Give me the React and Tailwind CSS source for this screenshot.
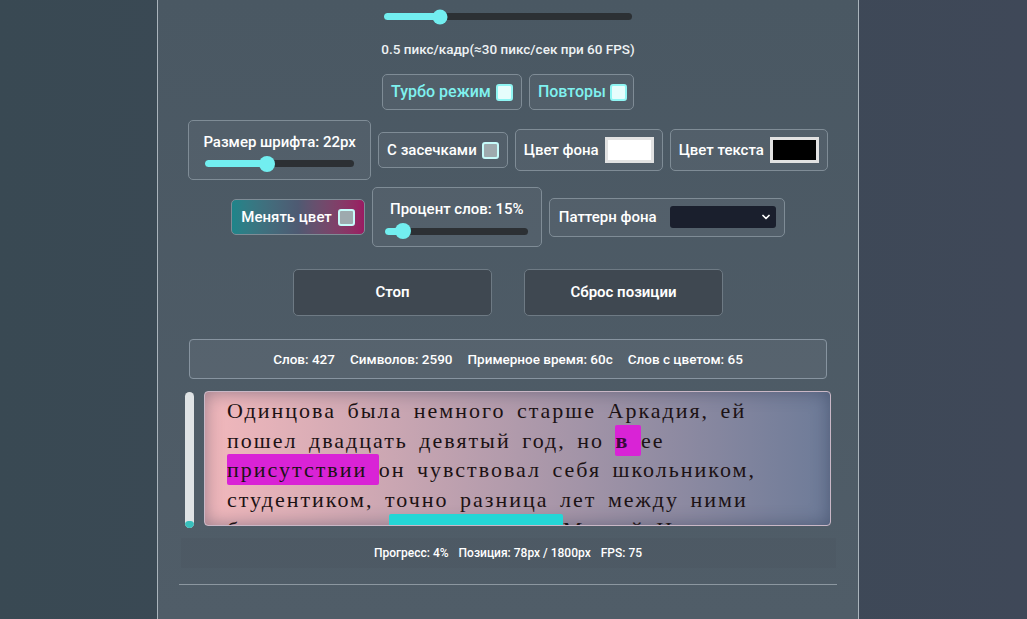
import React from 'react';
import { ChevronDown } from 'lucide-react';

function Slider({ width, fill, thumb = 15 }) {
  return (
    <div className="relative h-[7px] rounded-full bg-[#2c3034]" style={{ width }}>
      <div className="h-full rounded-full bg-[#72eef0]" style={{ width: fill }} />
      <div
        className="absolute top-1/2 -translate-y-1/2 -translate-x-1/2 rounded-full bg-[#72eef0]"
        style={{ left: fill, width: thumb, height: thumb }}
      />
    </div>
  );
}

function Check({ light }) {
  return (
    <span
      className={
        light
          ? 'inline-block w-[17px] h-[17px] rounded-[3px] border-2 border-[#8ff5f3] bg-[#e6fdfc]'
          : 'inline-block w-[17px] h-[17px] rounded-[3px] border-2 border-[#c6fbfa] bg-[#9eaaae]'
      }
    />
  );
}

function Box({ className = '', children }) {
  return (
    <div className={'flex items-center rounded-[5px] border border-[#7f8c96] bg-white/[0.04] ' + className}>
      {children}
    </div>
  );
}

function Swatch({ color }) {
  return (
    <span className="inline-block w-[49px] h-[26px] border-[3px] border-[#e2e2e2] bg-[#f5f5f5]">
      <span className="block w-full h-full" style={{ background: color }} />
    </span>
  );
}

export default function App() {
  return (
    <div className="min-h-screen h-[619px] overflow-hidden bg-gradient-to-r from-[#394953] via-[#3c4956] to-[#3f4858] pl-[157px] font-['Roboto',sans-serif] font-medium text-white">
      <div className="w-[702px] h-[619px] border-x border-[#aab4bc] bg-gradient-to-b from-[#4a5863] to-[#505d68] flex flex-col items-center">
        {/* speed slider */}
        <div className="pt-[13px]">
          <Slider width={248} fill={56} />
        </div>
        <div className="mt-[21px] text-[13.5px] leading-[16px] text-[#eef2f4]">
          0.5 пикс/кадр(≈30 пикс/сек при 60 FPS)
        </div>

        {/* checkboxes */}
        <div className="mt-[17px] flex gap-[7px]">
          <Box className="h-[36px] px-[8px] gap-[5px] text-[16px] text-[#7ff1ef]">
            <span>Турбо режим</span>
            <Check light />
          </Box>
          <Box className="h-[36px] pl-[8px] pr-[6px] gap-[4px] text-[16px] text-[#7ff1ef]">
            <span>Повторы</span>
            <Check light />
          </Box>
        </div>

        {/* row 2 */}
        <div className="mt-[10px] flex items-center gap-[7px]">
          <Box className="w-[183px] h-[60px] flex-col justify-center gap-[9px] px-[14px]">
            <span className="text-[15px] leading-[18px]">Размер шрифта: 22px</span>
            <Slider width={149} fill={62} thumb={16} />
          </Box>
          <Box className="h-[36px] px-[8px] gap-[5px] text-[15px]">
            <span>С засечками</span>
            <Check />
          </Box>
          <Box className="h-[42px] px-[8px] gap-[6px] text-[15px]">
            <span>Цвет фона</span>
            <Swatch color="#ffffff" />
          </Box>
          <Box className="h-[42px] px-[8px] gap-[6px] text-[15px]">
            <span>Цвет текста</span>
            <Swatch color="#000000" />
          </Box>
        </div>

        {/* row 3 */}
        <div className="mt-[7px] flex items-center gap-[7px]">
          <div className="flex items-center h-[36px] px-[9px] gap-[6px] text-[15px] rounded-[5px] border border-[#7f8c96] bg-gradient-to-r from-[#1d858a] via-[#4e5a72] to-[#9a1a62]">
            <span>Менять цвет</span>
            <Check />
          </div>
          <Box className="w-[170px] h-[60px] flex-col justify-center gap-[10px] px-[14px]">
            <span className="text-[15px] leading-[18px]">Процент слов: 15%</span>
            <Slider width={143} fill={18} thumb={16} />
          </Box>
          <Box className="h-[39px] pl-[9px] pr-[8px] gap-[13px] text-[15px]">
            <span>Паттерн фона</span>
            <div className="w-[106px] h-[22px] rounded-[3px] bg-[#1a1f2d] flex items-center justify-end pr-[4px]">
              <ChevronDown size={12} strokeWidth={3.5} className="text-white" />
            </div>
          </Box>
        </div>

        {/* buttons */}
        <div className="mt-[22px] flex gap-[32px]">
          <button className="w-[199px] h-[47px] rounded-[5px] border border-[#6e7a84] bg-[#3f4851] text-[15px] font-semibold">
            Стоп
          </button>
          <button className="w-[199px] h-[47px] rounded-[5px] border border-[#6e7a84] bg-[#3f4851] text-[15px] font-semibold">
            Сброс позиции
          </button>
        </div>

        {/* stats */}
        <div className="mt-[23px] w-[638px] h-[40px] rounded-[4px] border border-[#8794a0] bg-white/[0.05] flex items-center justify-center gap-[15px] text-[13.5px]">
          <span>Слов: 427</span>
          <span>Символов: 2590</span>
          <span>Примерное время: 60с</span>
          <span>Слов с цветом: 65</span>
        </div>

        {/* reading area */}
        <div className="mt-[12px] flex gap-[10px] w-[646px]">
          <div className="mt-[1px] w-[9px] h-[136px] rounded-full bg-[#dfe3e5] flex flex-col justify-end overflow-hidden">
            <div className="h-[7px] rounded-full bg-[#38bfbc]" />
          </div>
          <div className="flex-1 h-[135px] overflow-hidden rounded-[4px] border border-[#c9b7c6] bg-gradient-to-r from-[#f2b8bc] via-[#b09aab] to-[#6d7b98] shadow-[inset_0_0_18px_rgba(40,50,75,0.45)] pl-[22px] pr-[60px] pt-[4px]">
            <p className="font-['Liberation_Serif',serif] font-normal text-[22px] leading-[29.7px] tracking-[2px] [word-spacing:4px] text-[#1c1214]">
              Одинцова была немного старше Аркадия, ей пошел двадцать девятый год, но{' '}
              <span className="bg-[#d923d6] py-[3px] rounded-[2px] font-bold text-[#3a0a3a]">в </span>
              ее{' '}
              <span className="bg-[#d923d6] py-[3px] rounded-[2px]">присутствии </span>
              он чувствовал себя школьником, студентиком, точно разница лет между ними была гораздо{' '}
              <span className="bg-[#24d6d6] py-[3px] rounded-[2px]">существеннее. </span>
              Матвей Ильич подошел к ней с преувеличенным почтением.
            </p>
          </div>
        </div>

        {/* footer stats */}
        <div className="mt-[10px] w-[655px] h-[30px] bg-black/[0.025] flex items-center justify-center gap-[10px] text-[12px]">
          <span>Прогресс: 4%</span>
          <span>Позиция: 78px / 1800px</span>
          <span>FPS: 75</span>
        </div>

        <div className="mt-[16px] w-[658px] h-px bg-[#8c97a0]" />
      </div>
    </div>
  );
}
